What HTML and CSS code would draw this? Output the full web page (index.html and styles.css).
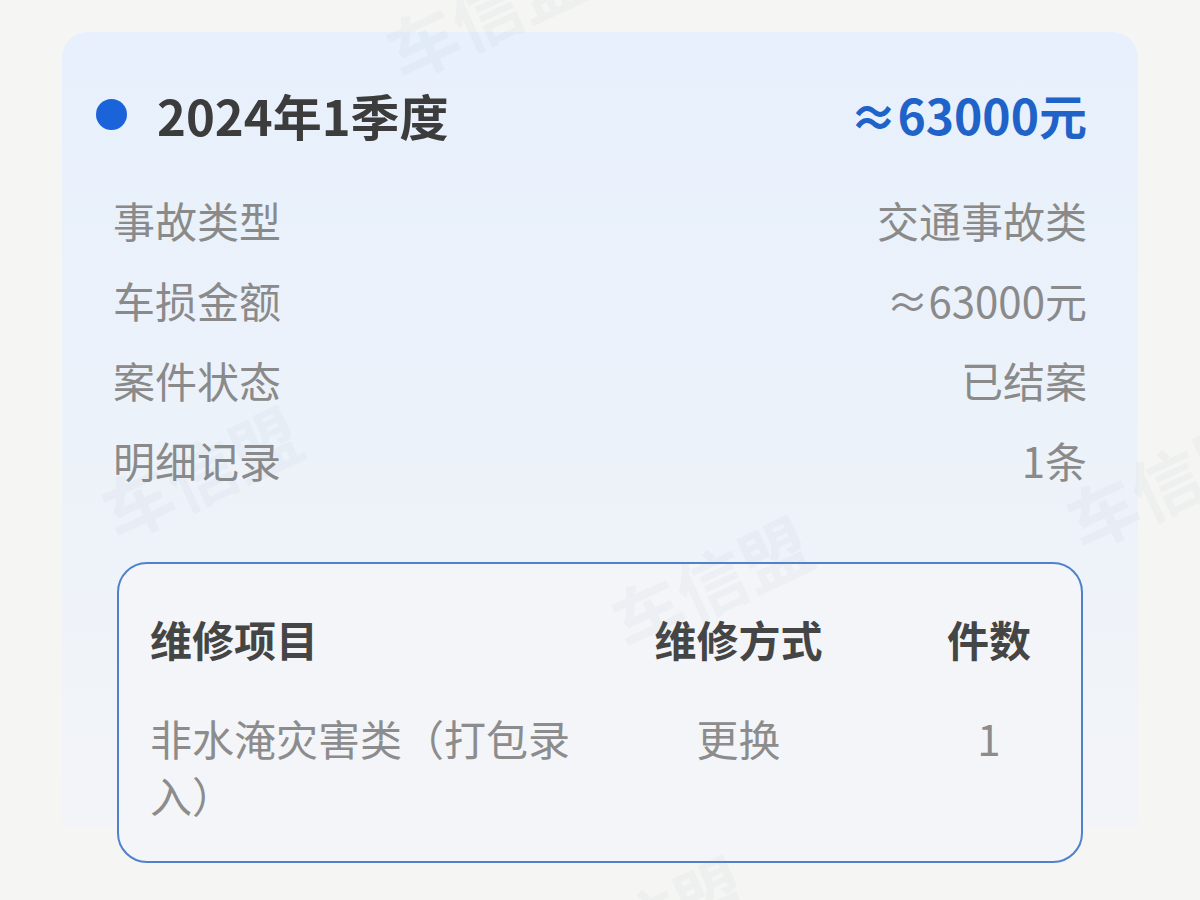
FILE: index.html
```html
<!DOCTYPE html>
<html lang="zh-CN">
<head>
  <meta charset="UTF-8" />
  <meta name="viewport" content="width=device-width, initial-scale=1.0" />
  <title>理赔记录</title>
  <link rel="stylesheet" href="styles.css">
</head>
<body>
  <div class="card">
    <div class="card-head">
      <div class="periodo">
        <span class="dot"></span>
        <span class="titulo">2024年1季度</span>
      </div>
      <span class="total">≈63000元</span>
    </div>

    <div class="info">
      <div class="linha"><span>事故类型</span><span>交通事故类</span></div>
      <div class="linha"><span>车损金额</span><span>≈63000元</span></div>
      <div class="linha"><span>案件状态</span><span>已结案</span></div>
      <div class="linha"><span>明细记录</span><span>1条</span></div>
    </div>

    <div class="detalhe">
      <div class="grade cabecalho">
        <span>维修项目</span>
        <span class="centro">维修方式</span>
        <span class="centro qtd">件数</span>
      </div>
      <div class="grade item">
        <span>非水淹灾害类（打包录入）</span>
        <span class="centro">更换</span>
        <span class="centro qtd">1</span>
      </div>
    </div>
  </div>

  <!-- marca d'agua -->
  <div class="marcas">
    <span class="marca m1">车信盟</span>
    <span class="marca m2">车信盟</span>
    <span class="marca m3">车信盟</span>
    <span class="marca m4">车信盟</span>
    <span class="marca m5">车信盟</span>
  </div>
</body>
</html>
```

FILE: styles.css
```css
body {
  margin: 0;
  background: #f5f5f4;
  font-family: "Noto Sans CJK SC", "Noto Sans", sans-serif;
  color: #333;
}

.card {
  width: 974px;
  margin: 32px 0 0 62px;
  padding: 52px 51px 0 51px;
  border-radius: 26px 26px 0 0;
  background: linear-gradient(180deg, #e7f0fc 0, #ecf2fa 360px, #f2f4f8 calc(100% - 36px), transparent calc(100% - 36px));
}

.card-head {
  display: flex;
  justify-content: space-between;
  align-items: center;
  height: 60px;
}

.periodo {
  display: flex;
  align-items: center;
  margin-left: -17px;
}

.dot {
  width: 31px;
  height: 31px;
  border-radius: 50%;
  background: #1b63d8;
  margin-right: 30px;
}

.titulo {
  font-size: 49px;
  font-weight: bold;
  color: #3c3c3c;
}

.total {
  font-size: 48px;
  font-weight: bold;
  color: #1f63c9;
}

.info {
  margin-top: 35px;
}

.linha {
  display: flex;
  justify-content: space-between;
  align-items: center;
  height: 80px;
  font-size: 42px;
  color: #8a8a8a;
}

.detalhe {
  margin: 63px 4px 0 4px;
  padding: 47px 0 38px 31px;
  border: 2px solid #4f81cc;
  border-radius: 30px;
  background: #f3f5f8;
}

.grade {
  display: grid;
  grid-template-columns: 446px 1fr 200px;
  font-size: 42px;
}

.cabecalho {
  font-weight: bold;
  color: #454545;
  line-height: 56px;
  margin-bottom: 42px;
}

.item {
  color: #8c8c8c;
  line-height: 57px;
}

.centro {
  text-align: center;
}

.qtd {
  padding-left: 16px;
}

.marcas {
  position: absolute;
  top: 0;
  left: 0;
  width: 1200px;
  height: 900px;
  overflow: hidden;
  pointer-events: none;
}

.marca {
  position: absolute;
  font-size: 70px;
  font-weight: bold;
  color: rgba(140, 150, 165, 0.06);
  transform: rotate(-25deg);
  white-space: nowrap;
}

.m1 { left: 380px; top: -40px; }
.m2 { left: 95px; top: 420px; }
.m3 { left: 605px; top: 530px; }
.m4 { left: 1060px; top: 430px; }
.m5 { left: 540px; top: 870px; }
```
